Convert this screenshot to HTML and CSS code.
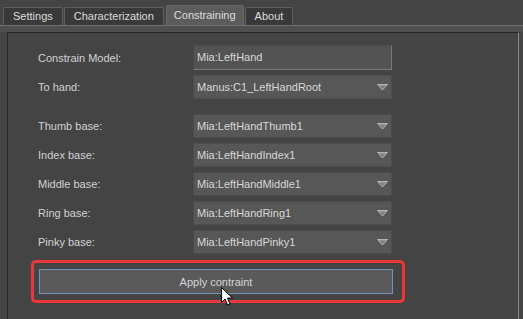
FILE: index.html
```html
<!DOCTYPE html>
<html lang="en">
<head>
    <meta charset="UTF-8">
    <title>Constraining</title>
    <link rel="stylesheet" href="styles.css">
</head>
<body>
    <div class="tabs">
        <div class="tab">Settings</div>
        <div class="tab">Characterization</div>
        <div class="tab active">Constraining</div>
        <div class="tab">About</div>
    </div>
    <div class="tab-base"></div>

    <div class="frame">
        <div class="form">
            <span class="label">Constrain Model:</span>
            <div class="field line-edit">Mia:LeftHand</div>

            <span class="label">To hand:</span>
            <div class="field combo">Manus:C1_LeftHandRoot<svg class="arrow" width="11" height="7" viewBox="0 0 11 7"><polygon points="0.5,0.5 10.5,0.5 5.5,6" fill="#7c7c7c" stroke="#b5b5b5" stroke-width="1"/><polyline points="2,1.8 9,1.8" stroke="#9a9a9a"/></svg></div>

            <div class="spacer"></div>

            <span class="label">Thumb base:</span>
            <div class="field combo">Mia:LeftHandThumb1<svg class="arrow" width="11" height="7" viewBox="0 0 11 7"><polygon points="0.5,0.5 10.5,0.5 5.5,6" fill="#7c7c7c" stroke="#b5b5b5" stroke-width="1"/><polyline points="2,1.8 9,1.8" stroke="#9a9a9a"/></svg></div>

            <span class="label">Index base:</span>
            <div class="field combo">Mia:LeftHandIndex1<svg class="arrow" width="11" height="7" viewBox="0 0 11 7"><polygon points="0.5,0.5 10.5,0.5 5.5,6" fill="#7c7c7c" stroke="#b5b5b5" stroke-width="1"/><polyline points="2,1.8 9,1.8" stroke="#9a9a9a"/></svg></div>

            <span class="label">Middle base:</span>
            <div class="field combo">Mia:LeftHandMiddle1<svg class="arrow" width="11" height="7" viewBox="0 0 11 7"><polygon points="0.5,0.5 10.5,0.5 5.5,6" fill="#7c7c7c" stroke="#b5b5b5" stroke-width="1"/><polyline points="2,1.8 9,1.8" stroke="#9a9a9a"/></svg></div>

            <span class="label">Ring base:</span>
            <div class="field combo">Mia:LeftHandRing1<svg class="arrow" width="11" height="7" viewBox="0 0 11 7"><polygon points="0.5,0.5 10.5,0.5 5.5,6" fill="#7c7c7c" stroke="#b5b5b5" stroke-width="1"/><polyline points="2,1.8 9,1.8" stroke="#9a9a9a"/></svg></div>

            <span class="label">Pinky base:</span>
            <div class="field combo">Mia:LeftHandPinky1<svg class="arrow" width="11" height="7" viewBox="0 0 11 7"><polygon points="0.5,0.5 10.5,0.5 5.5,6" fill="#7c7c7c" stroke="#b5b5b5" stroke-width="1"/><polyline points="2,1.8 9,1.8" stroke="#9a9a9a"/></svg></div>
        </div>

        <div class="button-wrap">
            <button class="apply">Apply contraint</button>
            <div class="highlight"></div>
            <svg class="cursor" width="13" height="19" viewBox="0 0 13 19">
                <path d="M0.5,0.5 L0.5,15.5 L4,12 L6.5,18 L9,17 L6.5,11 L11.5,11 Z" fill="#fff" stroke="#000" stroke-width="1" stroke-linejoin="round"/>
            </svg>
        </div>
    </div>
</body>
</html>
```

FILE: styles.css
```css
body {
    margin: 0;
    background: #444444;
    font-family: "Liberation Sans", Arial, sans-serif;
    font-size: 11px;
    color: #d6d6d6;
    overflow: hidden;
}
.tabs {
    display: flex;
    align-items: flex-end;
    gap: 1px;
    height: 25px;
    padding-left: 3px;
}
.tab {
    height: 17px;
    line-height: 17px;
    padding: 0 9px;
    background: #393939;
    border: 1px solid #5f5f5f;
    border-bottom: none;
    border-radius: 2px 2px 0 0;
    color: #dcdcdc;
}
.tab.active {
    height: 19px;
    line-height: 19px;
    padding: 0 7px;
    background: #5c5c5c;
    border-color: #686868;
    margin-left: 1px;
}
.tab-base {
    height: 1px;
    background: #707070;
    border-bottom: 6px solid #4f4f4f;
}
.frame {
    box-sizing: border-box;
    margin: 0 4px 0 7px;
    height: 287px;
    border-top: 1px solid #262626;
    border-left: 1px solid #262626;
    border-right: 1px solid #8a8a8a;
    padding: 12px 0 0 30px;
}
.form {
    display: grid;
    grid-template-columns: 155px 199px;
    row-gap: 5px;
    align-items: center;
}
.label {
    color: #d2d2d2;
}
.field {
    position: relative;
    height: 24px;
    line-height: 24px;
    padding-left: 3px;
    box-sizing: border-box;
    color: #d8d8d8;
}
.line-edit {
    height: 25px;
    background: #535353;
    border-top: 1px solid #4a4a4a;
    border-left: 1px solid #4a4a4a;
    border-right: 1px solid #7a7a7a;
    border-bottom: 1px solid #7a7a7a;
    line-height: 23px;
}
.form .line-edit + .label {
    margin-top: -1px;
}
.combo {
    background: #575757;
    border: 1px solid #4c4c4c;
    line-height: 22px;
}
.arrow {
    position: absolute;
    right: 3px;
    top: 8px;
}
.spacer {
    grid-column: 1 / 3;
    height: 5px;
}
.button-wrap {
    position: relative;
    margin: 15px 0 0 1px;
    width: 354px;
}
.apply {
    display: block;
    width: 354px;
    height: 25px;
    background: #5a5a5a;
    border: 1px solid #6e93bd;
    color: #d4d4d4;
    font-family: "Liberation Sans", Arial, sans-serif;
    font-size: 11px;
    padding: 0;
}
.highlight {
    position: absolute;
    left: -8px;
    top: -9px;
    right: -12px;
    bottom: -9px;
    border: 3px solid #e8383a;
    border-radius: 5px;
}
.cursor {
    position: absolute;
    left: 182px;
    top: 18px;
}
```
